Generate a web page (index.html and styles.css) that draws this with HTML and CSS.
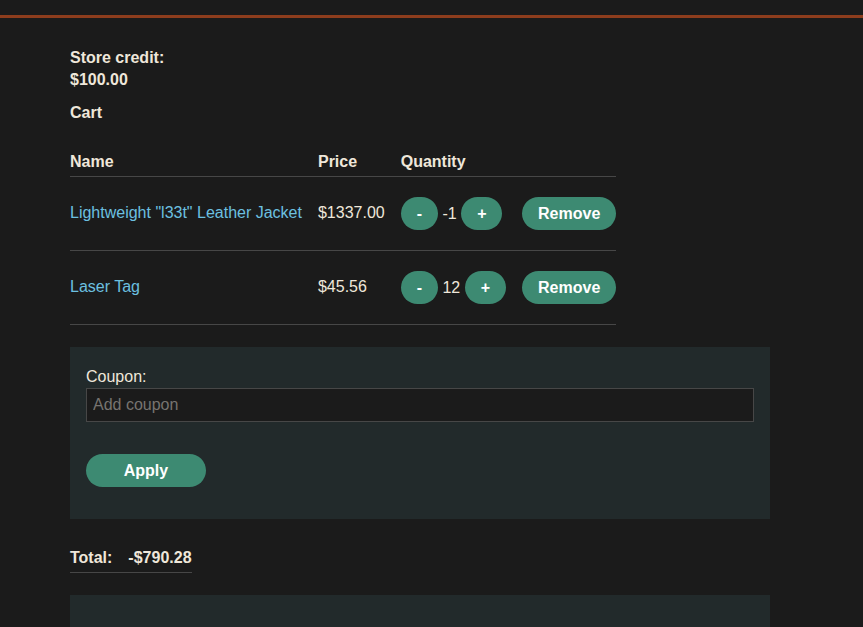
FILE: index.html
```html
<!DOCTYPE html>
<html lang="en">
<head>
<meta charset="utf-8">
<title>Cart</title>
<link rel="stylesheet" href="styles.css">
</head>
<body>
<header class="topbar"></header>
<main class="page">
  <section class="credit">
    <div class="label">Store credit:</div>
    <div class="amount">$100.00</div>
  </section>
  <h2 class="cart-title">Cart</h2>
  <table class="cart">
    <thead>
      <tr><th>Name</th><th>Price</th><th>Quantity</th><th></th></tr>
    </thead>
    <tbody>
      <tr>
        <td><a href="#" class="item-link">Lightweight "l33t" Leather Jacket</a></td>
        <td>$1337.00</td>
        <td class="qty"><button class="btn">-</button> -1 <button class="btn">+</button></td>
        <td class="actions"><button class="btn">Remove</button></td>
      </tr>
      <tr>
        <td><a href="#" class="item-link">Laser Tag</a></td>
        <td>$45.56</td>
        <td class="qty"><button class="btn">-</button> 12 <button class="btn">+</button></td>
        <td class="actions"><button class="btn">Remove</button></td>
      </tr>
    </tbody>
  </table>
  <form class="panel coupon">
    <label class="coupon-label" for="coupon">Coupon:</label>
    <input id="coupon" class="coupon-input" type="text" placeholder="Add coupon">
    <button type="button" class="btn btn-apply">Apply</button>
  </form>
  <table class="total">
    <tr><th>Total:</th><th>-$790.28</th></tr>
  </table>
  <section class="panel checkout"></section>
</main>
</body>
</html>
```
FILE: styles.css
```css
* { box-sizing: border-box; }

html, body {
  margin: 0;
  background: #1b1b1b;
  color: #efe7da;
  font-family: "Liberation Sans", Arial, sans-serif;
  font-size: 16px;
  line-height: 1.4;
}

.topbar {
  height: 18px;
  border-bottom: 3px solid #8e3d1d;
}

.page {
  width: 700px;
  margin-left: 70px;
  padding-top: 29px;
}

.credit { font-weight: bold; }

.cart-title {
  font-size: 16px;
  font-weight: bold;
  margin: 10px 0 23px;
}

.cart {
  border-collapse: collapse;
}

.cart th {
  text-align: left;
  font-weight: bold;
  padding: 4px 16px 2px 0;
  border-bottom: 1px solid #474747;
}

.cart td {
  padding: 20px 16px 20px 0;
  border-bottom: 1px solid #474747;
  white-space: nowrap;
  vertical-align: middle;
}

.cart td.actions { padding-right: 0; }
.cart th:last-child { padding-right: 0; }

.item-link {
  color: #6cc0e0;
  text-decoration: none;
}

.btn {
  font-family: inherit;
  font-size: 16px;
  font-weight: bold;
  line-height: 19px;
  color: #ffffff;
  background: #3d8a72;
  border: 0;
  border-radius: 17px;
  padding: 7px 16px;
  cursor: pointer;
}

.panel {
  background: #222a2b;
}

.coupon {
  margin-top: 22px;
  padding: 19px 16px 32px;
}

.coupon-label {
  display: block;
}

.coupon-input {
  display: block;
  width: 100%;
  height: 34px;
  margin: 0 0 32px;
  padding: 0 6px;
  background: #1b1b1b;
  border: 1px solid #474747;
  color: #efe7da;
  font-family: inherit;
  font-size: 16px;
}

.coupon-input::placeholder { color: #777470; }

.btn-apply {
  width: 120px;
}

.total {
  border-collapse: collapse;
  margin-top: 28px;
}

.total th {
  text-align: left;
  padding: 0 16px 3px 0;
  border-bottom: 1px solid #474747;
}

.total th:last-child { padding-right: 0; }

.checkout {
  margin-top: 22px;
  height: 120px;
}
```
